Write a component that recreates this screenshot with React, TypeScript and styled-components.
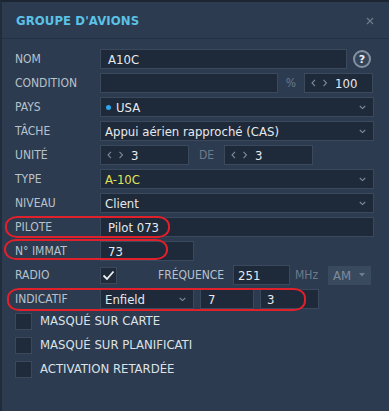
import React from "react";
import styled, { createGlobalStyle } from "styled-components";

const Global = createGlobalStyle`
  html, body { margin: 0; padding: 0; background: #2c3b4f; }
  body { font-family: "DejaVu Sans Condensed", "DejaVu Sans", sans-serif; }
  * { box-sizing: border-box; }
`;

const Panel = styled.div`
  position: relative;
  width: 389px;
  height: 411px;
  background: #2c3b4f;
  border-top: 2px solid #1c2633;
  border-left: 2px solid #212d3c;
  overflow: hidden;
`;

const Header = styled.div`
  height: 37px;
  display: flex;
  align-items: center;
  justify-content: space-between;
  padding: 1px 15px 0 14px;
  border-bottom: 1px solid #233142;
`;

const Title = styled.h1`
  margin: 0;
  font-size: 13px;
  font-weight: bold;
  color: #5bc1e6;
  letter-spacing: 0.1px;
`;

const Body = styled.div`
  display: flex;
  flex-direction: column;
  gap: 4px;
  padding: 10px 0 0 13px;
`;

const Row = styled.div`
  display: flex;
  align-items: center;
  height: 20px;
`;

const Label = styled.span<{ $w?: number; $pl?: number }>`
  width: ${(p) => p.$w ?? 85}px;
  padding-left: ${(p) => p.$pl ?? 0}px;
  flex: none;
  font-size: 12px;
  color: #b9c2cc;
  white-space: nowrap;
`;

const Unit = styled.span<{ $w: number; $pl?: number; $center?: boolean }>`
  width: ${(p) => p.$w}px;
  flex: none;
  padding-left: ${(p) => p.$pl ?? 0}px;
  text-align: ${(p) => (p.$center ? "center" : "left")};
  font-size: 12px;
  color: #6c7a8b;
`;

const Field = styled.div<{ $w: number; $ml?: number; $pl?: number; $color?: string }>`
  width: ${(p) => p.$w}px;
  margin-left: ${(p) => p.$ml ?? 0}px;
  height: 20px;
  flex: none;
  display: flex;
  align-items: center;
  padding-left: ${(p) => p.$pl ?? 7}px;
  background: #1e2939;
  border: 1px solid #3a495c;
  font-size: 13px;
  color: ${(p) => p.$color ?? "#e6eaee"};
  white-space: nowrap;
  overflow: hidden;
`;

const SelectText = styled.span`
  flex: 1;
  display: flex;
  align-items: center;
`;

const Chevron = styled.svg`
  flex: none;
  margin-right: 7px;
`;

const Dot = styled.span`
  width: 5px;
  height: 5px;
  border-radius: 50%;
  background: #2ba8ea;
  margin: 0 5px 0 1px;
`;

const SpinArrows = styled.svg`
  flex: none;
  margin-right: 7px;
`;

const Help = styled.div`
  width: 18px;
  height: 18px;
  margin-left: 6px;
  border-radius: 50%;
  border: 2px solid #8693a1;
  background: #34445a;
  display: flex;
  align-items: center;
  justify-content: center;
  font-size: 11px;
  font-weight: bold;
  color: #eef1f4;
  font-family: "DejaVu Sans", sans-serif;
`;

const Check = styled.div`
  width: 17px;
  height: 17px;
  flex: none;
  background: #1f2a3a;
  border: 1px solid #3a4859;
  display: flex;
  align-items: center;
  justify-content: center;
`;

const CheckText = styled.span`
  margin-left: 8px;
  font-size: 13px;
  color: #dde2e7;
  white-space: nowrap;
`;

const CheckRow = styled.div`
  display: flex;
  align-items: flex-start;
  height: 20px;
`;

const Disabled = styled.div`
  width: 43px;
  height: 19px;
  flex: none;
  background: #394a5f;
  display: flex;
  align-items: center;
  justify-content: space-between;
  padding: 0 6px 0 5px;
  font-size: 13px;
  color: #7e8c9c;
`;

const Mark = styled.div<{ $x: number; $y: number; $w: number; $h: number }>`
  position: absolute;
  left: ${(p) => p.$x}px;
  top: ${(p) => p.$y}px;
  width: ${(p) => p.$w}px;
  height: ${(p) => p.$h}px;
  border: 2px solid #e0212b;
  border-radius: 12px / 10px;
  pointer-events: none;
`;

const Caret = () => (
  <Chevron width="7" height="5" viewBox="0 0 7 5">
    <path d="M0.8 1 L3.5 3.6 L6.2 1" fill="none" stroke="#7f8d9c" strokeWidth="1.1" />
  </Chevron>
);

const Spin = () => (
  <SpinArrows width="17" height="8" viewBox="0 0 17 8">
    <path d="M4 0.8 L1 4 L4 7.2" fill="none" stroke="#7d8a99" strokeWidth="1.1" />
    <path d="M12.5 0.8 L15.5 4 L12.5 7.2" fill="none" stroke="#7d8a99" strokeWidth="1.1" />
  </SpinArrows>
);

const Select: React.FC<{ w: number; ml?: number; color?: string; children: React.ReactNode }> = ({
  w,
  ml,
  color,
  children,
}) => (
  <Field $w={w} $ml={ml} $pl={4} $color={color}>
    <SelectText>{children}</SelectText>
    <Caret />
  </Field>
);

const Spinner: React.FC<{ w: number; value: string }> = ({ w, value }) => (
  <Field $w={w} $pl={6}>
    <Spin />
    {value}
  </Field>
);

export default function App() {
  return (
    <>
      <Global />
      <Panel>
        <Header>
          <Title>GROUPE D'AVIONS</Title>
          <svg width="8" height="8" viewBox="0 0 8 8">
            <path d="M1 1 L7 7 M7 1 L1 7" stroke="#6e7b8a" strokeWidth="1.2" />
          </svg>
        </Header>
        <Body>
          <Row>
            <Label>NOM</Label>
            <Field $w={247}>A10C</Field>
            <Help>?</Help>
          </Row>
          <Row>
            <Label>CONDITION</Label>
            <Field $w={178} />
            <Unit $w={26} $center>
              %
            </Unit>
            <Spinner w={69} value="100" />
          </Row>
          <Row>
            <Label>PAYS</Label>
            <Select w={274}>
              <Dot />
              USA
            </Select>
          </Row>
          <Row>
            <Label>TÂCHE</Label>
            <Select w={274}>Appui aérien rapproché (CAS)</Select>
          </Row>
          <Row>
            <Label>UNITÉ</Label>
            <Spinner w={89} value="3" />
            <Unit $w={35} $pl={10}>
              DE
            </Unit>
            <Spinner w={89} value="3" />
          </Row>
          <Row>
            <Label>TYPE</Label>
            <Select w={274} color="#dfe35c">
              A-10C
            </Select>
          </Row>
          <Row>
            <Label>NIVEAU</Label>
            <Select w={274}>Client</Select>
          </Row>
          <Row>
            <Label>PILOTE</Label>
            <Field $w={274}>Pilot 073</Field>
          </Row>
          <Row>
            <Label>N° IMMAT</Label>
            <Field $w={94}>73</Field>
          </Row>
          <Row>
            <Label>RADIO</Label>
            <Check>
              <svg width="13" height="11" viewBox="0 0 13 11">
                <path d="M1.5 5.5 L5 9 L11.5 1.5" fill="none" stroke="#eef1f4" strokeWidth="1.8" />
              </svg>
            </Check>
            <Label $w={116} $pl={41}>
              FRÉQUENCE
            </Label>
            <Field $w={57} $pl={4}>
              251
            </Field>
            <Unit $w={38} $pl={5}>
              MHz
            </Unit>
            <Disabled>
              AM
              <svg width="6" height="4" viewBox="0 0 6 4">
                <path d="M0 0 L6 0 L3 3.5 Z" fill="#6f7d8d" />
              </svg>
            </Disabled>
          </Row>
          <Row>
            <Label>INDICATIF</Label>
            <Select w={94}>Enfield</Select>
            <Field $w={54} $ml={6}>
              7
            </Field>
            <Field $w={59} $ml={6} $pl={6}>
              3
            </Field>
          </Row>
          <CheckRow>
            <Check />
            <CheckText>MASQUÉ SUR CARTE</CheckText>
          </CheckRow>
          <CheckRow>
            <Check />
            <CheckText>MASQUÉ SUR PLANIFICATI</CheckText>
          </CheckRow>
          <CheckRow>
            <Check />
            <CheckText>ACTIVATION RETARDÉE</CheckText>
          </CheckRow>
        </Body>
        <Mark $x={3} $y={214} $w={165} $h={22} />
        <Mark $x={2} $y={237} $w={164} $h={21} />
        <Mark $x={5} $y={286} $w={299} $h={23} />
      </Panel>
    </>
  );
}
